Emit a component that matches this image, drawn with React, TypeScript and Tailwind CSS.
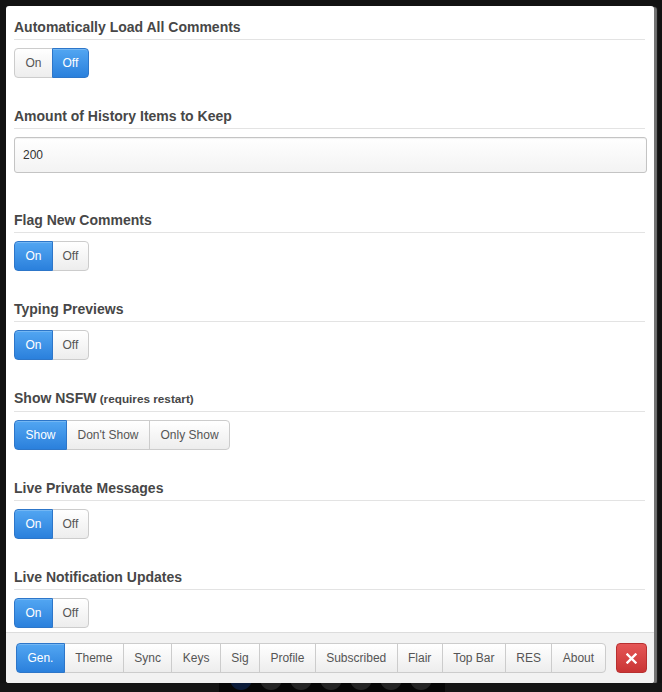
import React from "react";

const FONT = { fontFamily: '"Liberation Sans", Arial, Helvetica, sans-serif' };

function Btn({ label, active, first, last, pad = "px-[10.4px]" }: { label: string; active?: boolean; first?: boolean; last?: boolean; pad?: string }) {
  const p = label === "Off" ? "px-[9.5px]" : pad;
  const base = `h-[30px] ${p} flex items-center text-[12px] border whitespace-nowrap ${first ? "rounded-l-[4px]" : "-ml-px"} ${last ? "rounded-r-[4px]" : ""}`;
  const look = active
    ? "relative z-10 bg-linear-to-b from-[#52a6f2] to-[#2a80dc] border-[#2d76c9] text-white shadow-[inset_0_1px_0_rgba(255,255,255,0.2)]"
    : "bg-linear-to-b from-[#ffffff] to-[#ededed] border-[#cccccc] text-[#555555]";
  return <span className={`${base} ${look}`}>{label}</span>;
}

function Group({ options, active, pad }: { options: string[]; active: number; pad?: string }) {
  return (
    <div className="flex">
      {options.map((o, i) => (
        <Btn key={o} label={o} active={i === active} first={i === 0} last={i === options.length - 1} pad={pad} />
      ))}
    </div>
  );
}

function Section({ title, note, children, mb = "mb-[28px]" }: { title: string; note?: string; children: React.ReactNode; mb?: string }) {
  return (
    <div className={mb}>
      <div className="text-[14px] leading-[20px] font-bold text-[#474747] pb-[2px] border-b border-[#e3e3e3]">
        {title}
        {note && <span className="text-[11.75px]"> {note}</span>}
      </div>
      <div className="mt-[8px]">{children}</div>
    </div>
  );
}

export default function App() {
  const tabs = ["Gen.", "Theme", "Sync", "Keys", "Sig", "Profile", "Subscribed", "Flair", "Top Bar", "RES", "About"];
  return (
    <div className="h-[692px] w-[662px] overflow-hidden bg-[#121212] pt-[6px]" style={FONT}>
      <div className="ml-[6px] w-[648px] bg-white rounded-[3px] shadow-[3px_1px_1px_rgba(140,140,140,0.8)] overflow-hidden">
        <div className="h-[626px] overflow-hidden pt-[11px] pl-[8px] pr-[9px]">
          <Section title="Automatically Load All Comments">
            <Group options={["On", "Off"]} active={1} pad="px-[10.5px]" />
          </Section>
          <Section title="Amount of History Items to Keep" mb="mb-[37px]">
            <div className="h-[36px] mr-[-2px] border border-[#c4c4c4] rounded-[3px] bg-linear-to-b from-[#ffffff] to-[#f3f3f3] shadow-[inset_0_1px_1px_rgba(0,0,0,0.06)] flex items-center pl-[8px] text-[12px] text-[#333333]">
              200
            </div>
          </Section>
          <Section title="Flag New Comments">
            <Group options={["On", "Off"]} active={0} pad="px-[10.5px]" />
          </Section>
          <Section title="Typing Previews">
            <Group options={["On", "Off"]} active={0} pad="px-[10.5px]" />
          </Section>
          <Section title="Show NSFW" note="(requires restart)">
            <Group options={["Show", "Don't Show", "Only Show"]} active={0} pad="px-[10.5px]" />
          </Section>
          <Section title="Live Private Messages">
            <Group options={["On", "Off"]} active={0} pad="px-[10.5px]" />
          </Section>
          <Section title="Live Notification Updates">
            <Group options={["On", "Off"]} active={0} pad="px-[10.5px]" />
          </Section>
        </div>
        <div className="border-t border-[#dcdcdc] bg-[#f2f2f2] pt-[10px] pb-[10px] pl-[10px] flex items-center">
          <Group options={tabs} active={0} pad="px-[10.4px]" />
          <span className="ml-[10px] h-[30px] w-[31px] rounded-[4px] border border-[#b83030] bg-linear-to-b from-[#e55656] to-[#c93434] flex items-center justify-center">
            <svg width="11" height="11" viewBox="0 0 11 11">
              <path d="M1.5 1.5 L9.5 9.5 M9.5 1.5 L1.5 9.5" stroke="white" strokeWidth="2.4" strokeLinecap="square" />
            </svg>
          </span>
        </div>
      </div>
      <svg width="662" height="9" viewBox="0 0 662 9" className="block">
        <rect x="0" y="0" width="662" height="9" fill="#151515" />
        <rect x="219" y="0" width="226" height="9" fill="#070707" />
        <circle cx="241" cy="-4" r="11" fill="#0c1c3a" />
        {[271, 301, 331, 361, 391, 421].map((c) => (
          <circle key={c} cx={c} cy="-4" r="11" fill="#252525" />
        ))}
      </svg>
    </div>
  );
}
